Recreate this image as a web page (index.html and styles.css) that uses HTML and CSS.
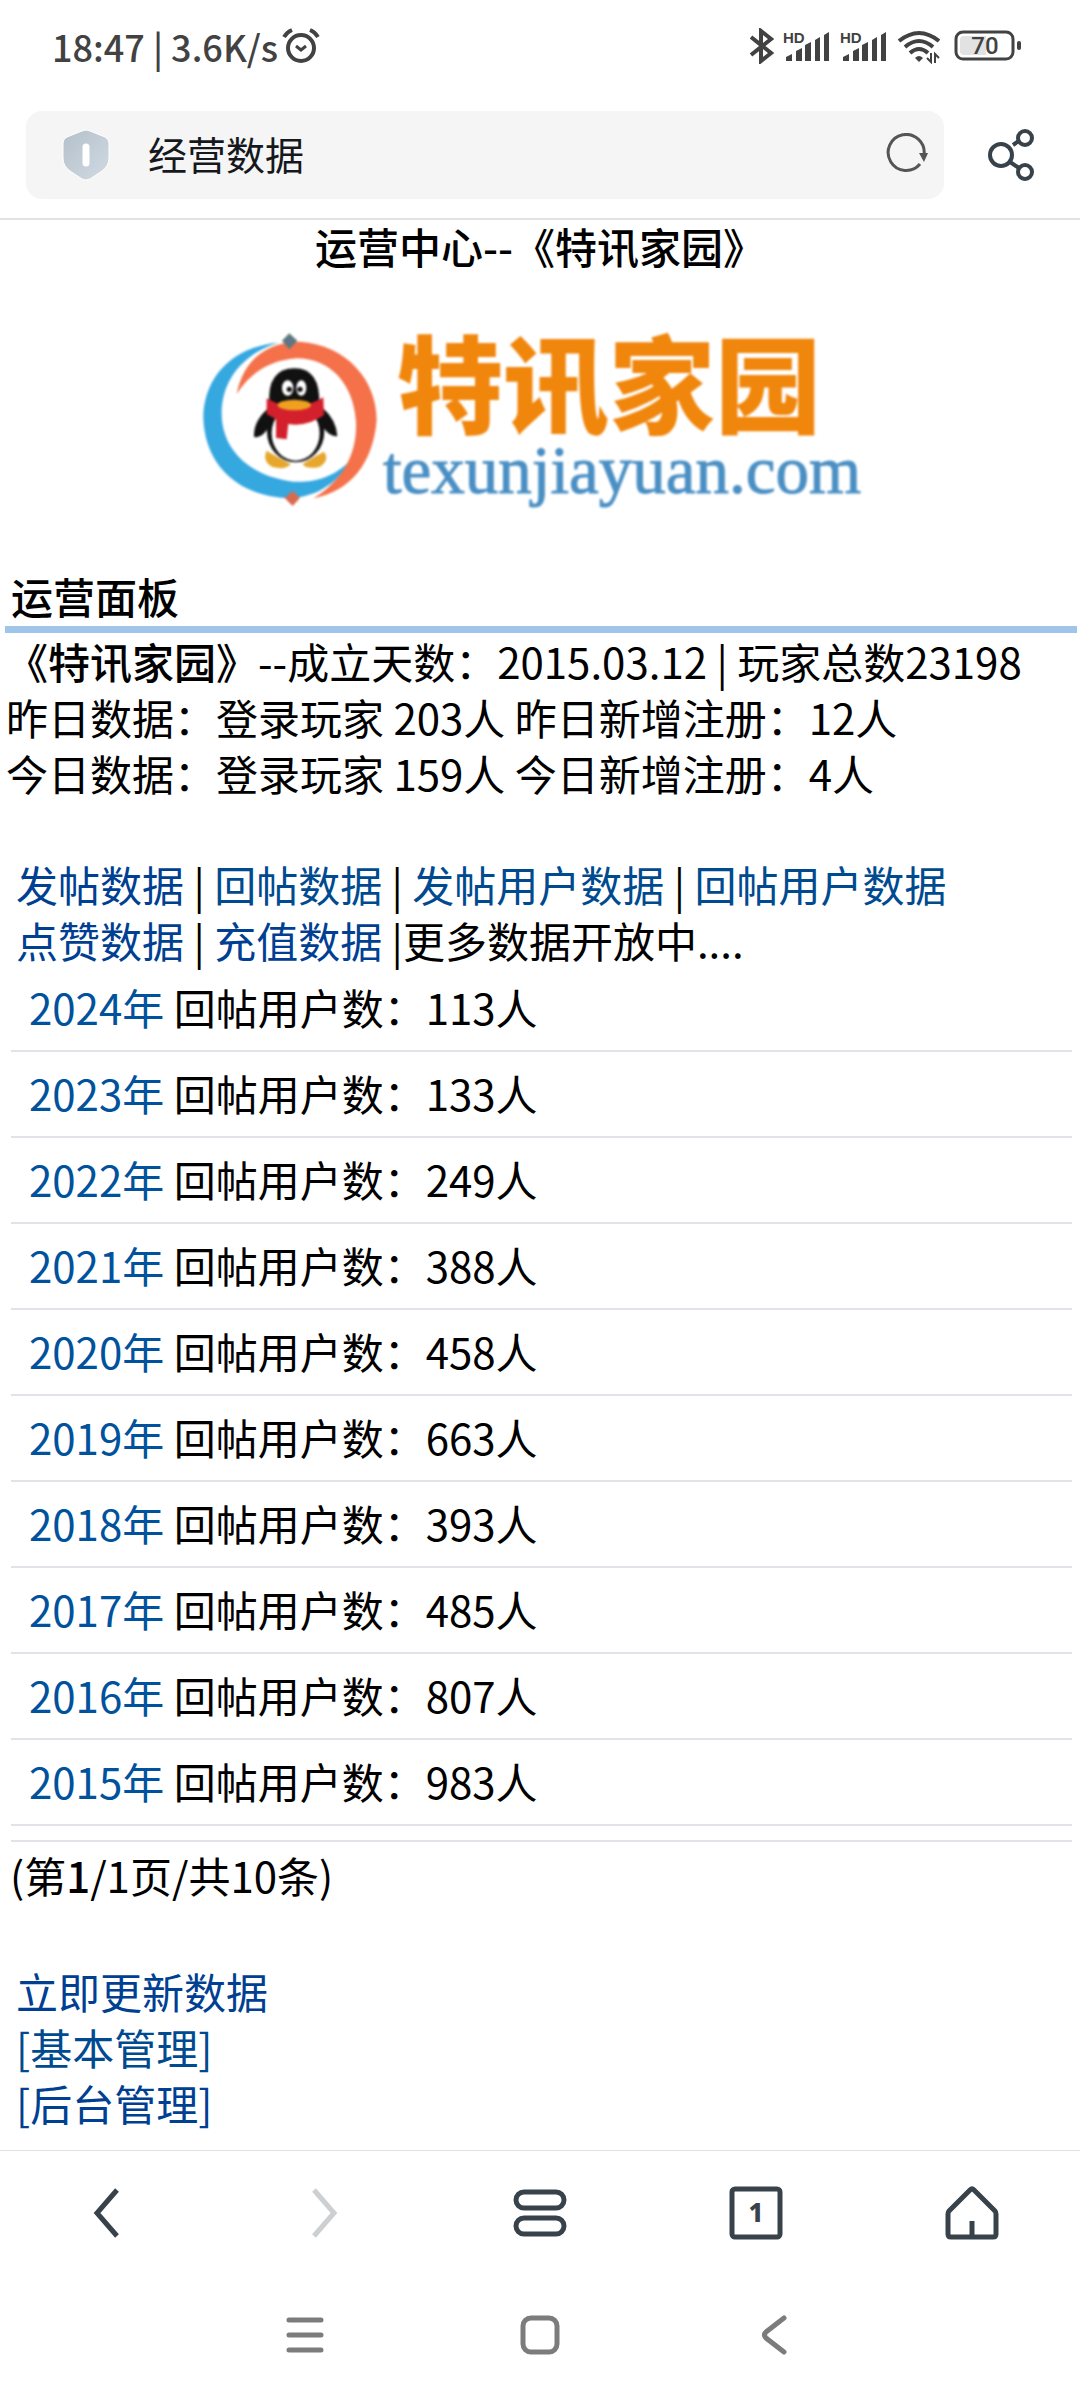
FILE: index.html
```
<!DOCTYPE html>
<html lang="zh-CN">
<head>
    <meta charset="UTF-8">
    <meta name="viewport" content="width=device-width, initial-scale=1.0">
    <title>经营数据</title>
    <link rel="stylesheet" href="styles.css">
</head>
<body>
    <div class="status-bar">
        <div class="status-left">
            <span>18:47 | 3.6K/s</span>
            <svg width="38" height="36" viewBox="0 0 38 36" fill="none" stroke="#424242" stroke-width="4">
                <circle cx="19" cy="20" r="13"/>
                <path d="M14 18l5 4 5-4" stroke-width="3"/>
                <path d="M2 9q3-5 8-7M36 9q-3-5-8-7"/>
            </svg>
        </div>
        <div class="status-right">
            <svg width="24" height="36" viewBox="0 0 24 36" fill="none" stroke="#424242" stroke-width="4">
                <path d="M1 9l20 16-10 8V3l10 8L1 27"/>
            </svg>
            <svg class="signal" width="48" height="36" viewBox="0 0 48 36" fill="#424242">
                <text x="0" y="15">HD</text>
                <path d="M3 29l6-3v7H3zM13 23l6-3v13h-6zM22 17l6-3v19h-6zM32 12l5-3v24h-5zM41 7l5-3v29h-5z"/>
            </svg>
            <svg class="signal" width="48" height="36" viewBox="0 0 48 36" fill="#424242">
                <text x="0" y="15">HD</text>
                <path d="M3 29l6-3v7H3zM13 23l6-3v13h-6zM22 17l6-3v19h-6zM32 12l5-3v24h-5zM41 7l5-3v29h-5z"/>
            </svg>
            <svg class="wifi" width="44" height="36" viewBox="0 0 44 36" fill="none" stroke="#424242" stroke-width="4">
                <path d="M2 13q20-16 40 0M8 19q14-12 28 0M13 25q9-8 18 0"/>
                <path d="M18 30q4-4 8 0l-4 4z" fill="#424242" stroke="none"/>
                <path d="M34 25v9l-4-4M38 35v-9l4 4" stroke-width="2"/>
            </svg>
            <svg class="battery" width="68" height="32" viewBox="0 0 68 32">
                <rect x="2" y="2" width="57" height="27" rx="7" fill="none" stroke="#424242" stroke-width="3"/>
                <path d="M10 6h22v19H10q-4 0-4-4V10q0-4 4-4z" fill="#e2e2e2"/>
                <rect x="63" y="11" width="4" height="9" rx="2" fill="#424242"/>
                <text x="31" y="24" text-anchor="middle" fill="#424242">70</text>
            </svg>
        </div>
    </div>

    <header class="address-bar">
        <div class="address">
            <svg width="48" height="52" viewBox="0 0 48 52">
                <defs>
                    <linearGradient id="shield" x1="0" y1="0" x2="1" y2="1">
                        <stop offset="0" stop-color="#b4c0ca"/>
                        <stop offset="1" stop-color="#d0dae3"/>
                    </linearGradient>
                </defs>
                <path d="M20 2q4-2 8 0l15 6q4 2 4 6v15q0 8-7 13l-12 8q-4 2-8 0L8 42Q1 37 1 29V14q0-4 4-6z" fill="url(#shield)" stroke="#fff"/>
                <path d="M24 18v16" stroke="#fff" stroke-width="7" stroke-linecap="round"/>
            </svg>
            <h1>经营数据</h1>
            <button aria-label="刷新">
                <svg width="44" height="44" viewBox="0 0 44 44">
                    <path d="M36 31A18 18 0 1 1 40 22" fill="none" stroke="#555" stroke-width="3"/>
                    <path d="M35 20h9l-4 9z" fill="#555"/>
                </svg>
            </button>
        </div>
        <button aria-label="分享">
            <svg width="48" height="52" viewBox="0 0 48 52" fill="none" stroke="#37424a" stroke-width="4">
                <circle cx="13" cy="26" r="11"/>
                <circle cx="37" cy="9" r="7"/>
                <circle cx="37" cy="43" r="7"/>
                <path d="M25 16l7-5M22 33l9 6"/>
            </svg>
        </button>
    </header>

    <main>
        <h2 class="page-title">运营中心--《特讯家园》</h2>
        <svg class="logo" viewBox="0 0 700 293" role="img" aria-label="特讯家园 texunjiayuan.com">
            <g transform="translate(-20 14) scale(.3333)">
                <path d="M325 158C180 170 100 270 100 385C105 530 210 622 360 625C450 620 510 570 545 508C490 565 430 578 370 575C240 560 155 480 155 370C155 270 220 190 325 158z" fill="#35a8e0"/>
                <path d="M200 312C220 210 290 155 390 155C530 165 620 270 620 390C610 520 540 605 430 625C520 570 562 490 558 395C550 280 480 205 380 205C300 210 240 250 200 312z" fill="#f4714a"/>
                <path d="M358 130l24 22-24 26-22-26z" fill="#5f7683"/>
                <path d="M368 602l22 22-22 24-24-24z" fill="#d96a50"/>
                <!-- penguin -->
                <path d="M300 350Q250 390 252 440Q275 450 305 400zM455 350Q500 390 502 438Q480 445 450 400z" fill="#111"/>
                <ellipse cx="377" cy="425" rx="86" ry="92" fill="#111"/>
                <ellipse cx="377" cy="430" rx="72" ry="82" fill="#fff"/>
                <path d="M290 482Q320 500 362 522Q350 540 310 532Q275 515 290 482zM462 485Q430 500 398 522Q410 540 450 530Q480 510 462 485z" fill="#e6a72c"/>
                <path d="M298 345Q290 235 374 235Q452 235 448 345Q375 390 298 345z" fill="#111"/>
                <ellipse cx="353" cy="294" rx="17" ry="23" fill="#fff"/>
                <ellipse cx="394" cy="294" rx="15" ry="23" fill="#fff"/>
                <circle cx="358" cy="298" r="8" fill="#111"/>
                <circle cx="390" cy="298" r="8" fill="#111"/>
                <path d="M290 325Q375 375 460 322L462 375Q410 412 355 402L350 448L318 444L318 388L290 372z" fill="#d4202c"/>
                <ellipse cx="373" cy="345" rx="50" ry="16" fill="#f0a020"/>
            </g>
            <text class="logo-name" x="207" y="149">特讯家园</text>
            <text class="logo-domain" x="193" y="217">texunjiayuan.com</text>
        </svg>

        <h3 class="panel-title">运营面板</h3>

        <div class="stats">
            <p><b>《特讯家园》</b>--成立天数：2015.03.12 | 玩家总数23198</p>
            <p>昨日数据：登录玩家 203人 昨日新增注册：12人</p>
            <p>今日数据：登录玩家 159人 今日新增注册：4人</p>
        </div>

        <div class="links">
            <p><a href="#">发帖数据</a> | <a href="#" class="seen">回帖数据</a> | <a href="#" class="seen">发帖用户数据</a> | <a href="#" class="seen">回帖用户数据</a></p>
            <p><a href="#">点赞数据</a> | <a href="#">充值数据</a> |更多数据开放中....</p>
        </div>

        <ul class="years">
            <li><a href="#">2024年</a> 回帖用户数：113人</li>
            <li><a href="#">2023年</a> 回帖用户数：133人</li>
            <li><a href="#">2022年</a> 回帖用户数：249人</li>
            <li><a href="#">2021年</a> 回帖用户数：388人</li>
            <li><a href="#">2020年</a> 回帖用户数：458人</li>
            <li><a href="#">2019年</a> 回帖用户数：663人</li>
            <li><a href="#">2018年</a> 回帖用户数：393人</li>
            <li><a href="#">2017年</a> 回帖用户数：485人</li>
            <li><a href="#">2016年</a> 回帖用户数：807人</li>
            <li><a href="#">2015年</a> 回帖用户数：983人</li>
        </ul>

        <p class="pager">(第<b>1</b>/1页/共10条)</p>

        <div class="links manage">
            <p><a href="#">立即更新数据</a></p>
            <p><a href="#" class="seen">[基本管理]</a></p>
            <p><a href="#">[后台管理]</a></p>
        </div>
    </main>

    <nav class="toolbar">
        <button aria-label="后退">
            <svg width="56" height="56" viewBox="0 0 56 56"><path d="M37 5L17 28l20 23"/></svg>
        </button>
        <button aria-label="前进" disabled>
            <svg width="56" height="56" viewBox="0 0 56 56"><path d="M18 5l20 23-20 23"/></svg>
        </button>
        <button aria-label="菜单">
            <svg width="56" height="56" viewBox="0 0 56 56">
                <rect x="4" y="7" width="48" height="16" rx="8"/>
                <rect x="4" y="33" width="48" height="16" rx="8"/>
            </svg>
        </button>
        <button aria-label="标签页">
            <svg width="56" height="56" viewBox="0 0 56 56">
                <rect x="4" y="4" width="48" height="48" rx="3"/>
                <text x="28" y="37" text-anchor="middle">1</text>
            </svg>
        </button>
        <button aria-label="主页">
            <svg width="56" height="56" viewBox="0 0 56 56">
                <path d="M26 5q2-2 4 0l21 21q1 1 1 3v20q0 3-3 3H7q-3 0-3-3V29q0-2 1-3zM28 36v16"/>
            </svg>
        </button>
    </nav>

    <nav class="system-nav">
        <button aria-label="最近任务">
            <svg width="40" height="40" viewBox="0 0 40 40"><path d="M4 5h32M4 20h32M4 35h32"/></svg>
        </button>
        <button aria-label="桌面">
            <svg width="40" height="40" viewBox="0 0 40 40"><rect x="3" y="3" width="34" height="34" rx="8"/></svg>
        </button>
        <button aria-label="返回">
            <svg width="40" height="40" viewBox="0 0 40 40"><path d="M29 3L11 17q-3 3 0 6l18 14"/></svg>
        </button>
    </nav>
</body>
</html>
```

FILE: styles.css
```
* {
    box-sizing: border-box;
}

body {
    display: flex;
    flex-direction: column;
    min-height: 100vh;
    margin: 0;
    background: #fff;
    color: #000;
    font-family: "Noto Sans CJK SC", sans-serif;
    font-size: 42px;
    line-height: 56px;
}

h1, h2, h3, p, ul {
    margin: 0;
    padding: 0;
}

b {
    font-weight: 500;
}

a {
    color: #003f92;
    text-decoration: none;
}

a.seen {
    color: #004a90;
}

svg {
    display: block;
}

button {
    padding: 0;
    border: none;
    background: none;
}

/* status bar */
.status-bar {
    display: flex;
    justify-content: space-between;
    align-items: center;
    height: 92px;
    padding: 0 58px 0 52px;
    color: #424242;
    font-size: 36px;
    font-weight: 500;
}

.status-left, .status-right {
    display: flex;
    align-items: center;
}

.status-left {
    gap: 4px;
}

.status-right {
    gap: 9px;
}

.signal text {
    font-family: "Liberation Sans", sans-serif;
    font-size: 15px;
    font-weight: 700;
}

.battery {
    margin-left: 4px;
}

.battery text {
    font-family: Roboto, sans-serif;
    font-size: 24px;
}

/* address bar */
.address-bar {
    display: flex;
    align-items: center;
    gap: 44px;
    padding: 19px 44px 19px 26px;
    border-bottom: 2px solid #dfe3e5;
}

.address {
    display: flex;
    flex: 1;
    align-items: center;
    height: 88px;
    padding: 0 16px 0 36px;
    border-radius: 16px;
    background: #f5f5f5;
}

.address h1 {
    flex: 1;
    padding: 0 0 4px 38px;
    color: #15181c;
    font-size: 39px;
    font-weight: 400;
}

/* page */
main {
    flex: 1;
}

.page-title {
    padding-bottom: 4px;
    font-size: 42px;
    font-weight: 500;
    line-height: 52px;
    text-align: center;
}

.logo {
    width: 700px;
    max-width: 100%;
    margin: 0 auto;
    filter: blur(1px);
}

.logo-name {
    fill: #f0860c;
    font-size: 106px;
    font-weight: 900;
}

.logo-domain {
    fill: #4a8fc4;
    stroke: #4a8fc4;
    font-family: "Liberation Serif", serif;
    font-size: 67px;
}

.panel-title {
    margin: 0 3px 0 5px;
    padding: 0 0 4px 6px;
    border-bottom: 7px solid #9fc5ea;
    font-size: 42px;
    font-weight: 500;
    line-height: 53px;
}

.stats {
    padding-left: 6px;
}

.links {
    margin-top: 55px;
    padding-left: 16px;
}

.years {
    margin: -2px 8px 0 11px;
    padding-bottom: 14px;
    border-bottom: 2px solid #e2e3e8;
    list-style: none;
}

.years li {
    padding: 13px 18px 15px;
    border-bottom: 2px solid #e2e3e8;
}

.years a {
    color: #00529c;
}

.pager {
    padding: 5px 10px;
}

/* browser toolbar */
.toolbar {
    display: grid;
    grid-template-columns: repeat(5, 1fr);
    height: 124px;
    border-top: 1px solid #dfe1e2;
}

.toolbar button, .system-nav button {
    display: flex;
    justify-content: center;
    align-items: center;
}

.toolbar svg {
    fill: none;
    stroke: #37424a;
    stroke-width: 5;
}

.toolbar button:disabled svg {
    stroke: #cdd0d2;
}

.toolbar text {
    fill: #37424a;
    stroke: none;
    font-family: "Noto Sans", sans-serif;
    font-size: 26px;
    font-weight: 800;
}

/* system navigation */
.system-nav {
    display: flex;
    justify-content: center;
    gap: 195px;
    height: 126px;
    padding-bottom: 4px;
}

.system-nav svg {
    fill: none;
    stroke: #7c7c7c;
    stroke-width: 5;
    stroke-linecap: round;
}
```
